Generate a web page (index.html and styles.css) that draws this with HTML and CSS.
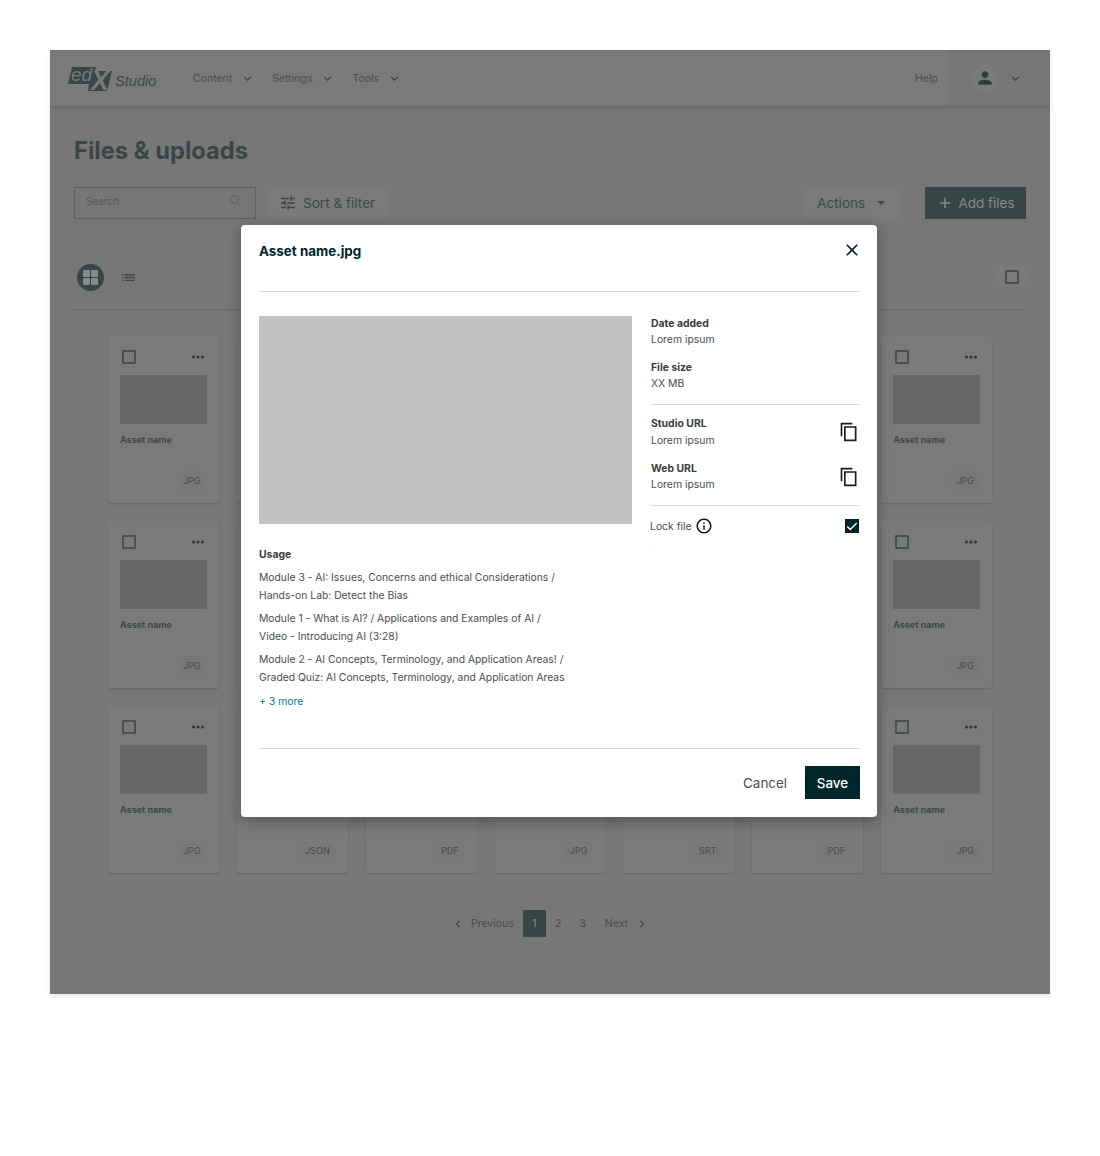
FILE: index.html
```html
<!doctype html>
<html lang="en">
<head>
    <meta charset="UTF-8" />
    <meta name="viewport" content="width=device-width, initial-scale=1.0" />
    <title>Files &amp; uploads</title>
    <link rel="stylesheet" href="styles.css">
</head>
<body>
    <svg class="icon-defs" width="0" height="0">
        <symbol id="i-chev" viewBox="0 0 24 24"><path d="M7.4 8.6 12 13.2l4.6-4.6L18 10l-6 6-6-6z"/></symbol>
        <symbol id="i-left" viewBox="0 0 24 24"><path d="M15.4 7.4 10.8 12l4.6 4.6L14 18l-6-6 6-6z"/></symbol>
        <symbol id="i-right" viewBox="0 0 24 24"><path d="M8.6 16.6 13.2 12 8.6 7.4 10 6l6 6-6 6z"/></symbol>
        <symbol id="i-dots" viewBox="0 0 24 24"><path d="M6 10a2 2 0 1 0 0 4 2 2 0 0 0 0-4zm12 0a2 2 0 1 0 0 4 2 2 0 0 0 0-4zm-6 0a2 2 0 1 0 0 4 2 2 0 0 0 0-4z"/></symbol>
        <symbol id="i-copy" viewBox="0 0 24 24"><path d="M16 1H2v16h2V3h12V1zm5 4H6v18h15V5zm-2 16H8V7h11v14z"/></symbol>
        <symbol id="i-box" viewBox="0 0 24 24"><path d="M21 3H3v18h18V3zm-2 16H5V5h14v14z"/></symbol>
    </svg>

    <div class="frame">
        <header class="site-header">
            <div class="logo">
                <svg class="logo-mark" width="46" height="26" viewBox="0 0 46 26">
                    <polygon points="4,1 28,1 27,5 44,5 39,25 20,25 21,18 0,18" fill="#384646"/>
                    <text x="3" y="15" class="logo-ed">ed</text>
                    <text x="23" y="24" class="logo-x">X</text>
                </svg>
                <span class="logo-studio">Studio</span>
            </div>
            <nav class="main-nav">
                <a href="#">Content <svg class="nav-chev"><use href="#i-chev"/></svg></a>
                <a href="#">Settings <svg class="nav-chev"><use href="#i-chev"/></svg></a>
                <a href="#">Tools <svg class="nav-chev"><use href="#i-chev"/></svg></a>
            </nav>
            <a href="#" class="help-link">Help</a>
            <div class="user-menu">
                <span class="avatar"><svg viewBox="0 0 24 24" width="20" height="20"><path d="M12 12c2.2 0 4-1.8 4-4s-1.8-4-4-4-4 1.8-4 4 1.8 4 4 4zm0 2c-2.7 0-8 1.3-8 4v2h16v-2c0-2.7-5.3-4-8-4z"/></svg></span>
                <svg class="nav-chev"><use href="#i-chev"/></svg>
            </div>
        </header>

        <main class="content">
            <h1 class="page-title">Files &amp; uploads</h1>

            <div class="toolbar">
                <div class="search-box">
                    <span>Search</span>
                    <svg viewBox="0 0 24 24" width="16" height="16"><path d="M15.5 14h-.79l-.28-.27A6.47 6.47 0 0 0 16 9.5 6.5 6.5 0 1 0 9.5 16c1.61 0 3.09-.59 4.23-1.57l.27.28v.79l5 4.99L20.49 19l-4.99-5zm-6 0C7.01 14 5 11.99 5 9.5S7.01 5 9.5 5 14 7.01 14 9.5 11.99 14 9.5 14z"/></svg>
                </div>
                <button class="tool-btn sort-btn">
                    <svg viewBox="0 0 24 24" width="18" height="18"><path d="M3 17v2h6v-2H3zM3 5v2h10V5H3zm10 16v-2h8v-2h-8v-2h-2v6h2zM7 9v2H3v2h4v2h2V9H7zm14 4v-2H11v2h10zm-6-4h2V7h4V5h-4V3h-2v6z"/></svg>
                    Sort &amp; filter
                </button>
                <button class="tool-btn actions-btn">Actions <i class="caret"></i></button>
                <button class="add-btn">
                    <svg viewBox="0 0 24 24" width="18" height="18"><path d="M19 13h-6v6h-2v-6H5v-2h6V5h2v6h6z"/></svg>
                    Add files
                </button>
            </div>

            <div class="view-row">
                <span class="view-grid"><i></i><i></i><i></i><i></i></span>
                <svg class="view-list" viewBox="0 0 24 24" width="17" height="17"><path d="M3 13h2v-2H3v2zm0 4h2v-2H3v2zm0-8h2V7H3v2zm4 4h14v-2H7v2zm0 4h14v-2H7v2zM7 7v2h14V7H7z"/></svg>
                <span class="select-all"><svg viewBox="0 0 24 24" width="18" height="18"><use href="#i-box"/></svg></span>
            </div>

            <div class="card-grid">
                <div class="card"><div class="card-top"><svg class="card-check"><use href="#i-box"/></svg><svg class="card-dots"><use href="#i-dots"/></svg></div><div class="thumb"></div><p class="asset-name">Asset name</p><span class="badge">JPG</span></div>
                <div class="card"><div class="card-top"><svg class="card-check"><use href="#i-box"/></svg><svg class="card-dots"><use href="#i-dots"/></svg></div><div class="thumb"></div><p class="asset-name">Asset name</p><span class="badge">JPG</span></div>
                <div class="card"><div class="card-top"><svg class="card-check"><use href="#i-box"/></svg><svg class="card-dots"><use href="#i-dots"/></svg></div><div class="thumb"></div><p class="asset-name">Asset name</p><span class="badge">JPG</span></div>
                <div class="card"><div class="card-top"><svg class="card-check"><use href="#i-box"/></svg><svg class="card-dots"><use href="#i-dots"/></svg></div><div class="thumb"></div><p class="asset-name">Asset name</p><span class="badge">JPG</span></div>
                <div class="card"><div class="card-top"><svg class="card-check"><use href="#i-box"/></svg><svg class="card-dots"><use href="#i-dots"/></svg></div><div class="thumb"></div><p class="asset-name">Asset name</p><span class="badge">JPG</span></div>
                <div class="card"><div class="card-top"><svg class="card-check"><use href="#i-box"/></svg><svg class="card-dots"><use href="#i-dots"/></svg></div><div class="thumb"></div><p class="asset-name">Asset name</p><span class="badge">JPG</span></div>
                <div class="card"><div class="card-top"><svg class="card-check"><use href="#i-box"/></svg><svg class="card-dots"><use href="#i-dots"/></svg></div><div class="thumb"></div><p class="asset-name">Asset name</p><span class="badge">JPG</span></div>

                <div class="card"><div class="card-top"><svg class="card-check"><use href="#i-box"/></svg><svg class="card-dots"><use href="#i-dots"/></svg></div><div class="thumb"></div><p class="asset-name">Asset name</p><span class="badge">JPG</span></div>
                <div class="card"><div class="card-top"><svg class="card-check"><use href="#i-box"/></svg><svg class="card-dots"><use href="#i-dots"/></svg></div><div class="thumb"></div><p class="asset-name">Asset name</p><span class="badge">JPG</span></div>
                <div class="card"><div class="card-top"><svg class="card-check"><use href="#i-box"/></svg><svg class="card-dots"><use href="#i-dots"/></svg></div><div class="thumb"></div><p class="asset-name">Asset name</p><span class="badge">JPG</span></div>
                <div class="card"><div class="card-top"><svg class="card-check"><use href="#i-box"/></svg><svg class="card-dots"><use href="#i-dots"/></svg></div><div class="thumb"></div><p class="asset-name">Asset name</p><span class="badge">JPG</span></div>
                <div class="card"><div class="card-top"><svg class="card-check"><use href="#i-box"/></svg><svg class="card-dots"><use href="#i-dots"/></svg></div><div class="thumb"></div><p class="asset-name">Asset name</p><span class="badge">JPG</span></div>
                <div class="card"><div class="card-top"><svg class="card-check"><use href="#i-box"/></svg><svg class="card-dots"><use href="#i-dots"/></svg></div><div class="thumb"></div><p class="asset-name">Asset name</p><span class="badge">JPG</span></div>
                <div class="card"><div class="card-top"><svg class="card-check"><use href="#i-box"/></svg><svg class="card-dots"><use href="#i-dots"/></svg></div><div class="thumb"></div><p class="asset-name">Asset name</p><span class="badge">JPG</span></div>

                <div class="card"><div class="card-top"><svg class="card-check"><use href="#i-box"/></svg><svg class="card-dots"><use href="#i-dots"/></svg></div><div class="thumb"></div><p class="asset-name">Asset name</p><span class="badge">JPG</span></div>
                <div class="card"><div class="card-top"><svg class="card-check"><use href="#i-box"/></svg><svg class="card-dots"><use href="#i-dots"/></svg></div><div class="thumb"></div><p class="asset-name">Asset name</p><span class="badge">JSON</span></div>
                <div class="card"><div class="card-top"><svg class="card-check"><use href="#i-box"/></svg><svg class="card-dots"><use href="#i-dots"/></svg></div><div class="thumb"></div><p class="asset-name">Asset name</p><span class="badge">PDF</span></div>
                <div class="card"><div class="card-top"><svg class="card-check"><use href="#i-box"/></svg><svg class="card-dots"><use href="#i-dots"/></svg></div><div class="thumb"></div><p class="asset-name">Asset name</p><span class="badge">JPG</span></div>
                <div class="card"><div class="card-top"><svg class="card-check"><use href="#i-box"/></svg><svg class="card-dots"><use href="#i-dots"/></svg></div><div class="thumb"></div><p class="asset-name">Asset name</p><span class="badge">SRT</span></div>
                <div class="card"><div class="card-top"><svg class="card-check"><use href="#i-box"/></svg><svg class="card-dots"><use href="#i-dots"/></svg></div><div class="thumb"></div><p class="asset-name">Asset name</p><span class="badge">PDF</span></div>
                <div class="card"><div class="card-top"><svg class="card-check"><use href="#i-box"/></svg><svg class="card-dots"><use href="#i-dots"/></svg></div><div class="thumb"></div><p class="asset-name">Asset name</p><span class="badge">JPG</span></div>
            </div>

            <div class="pagination">
                <svg class="page-chev"><use href="#i-left"/></svg>
                <a href="#" class="page-prev">Previous</a>
                <a href="#" class="page-num active">1</a>
                <a href="#" class="page-num">2</a>
                <a href="#" class="page-num">3</a>
                <a href="#" class="page-next">Next</a>
                <svg class="page-chev"><use href="#i-right"/></svg>
            </div>
        </main>

        <div class="modal">
            <div class="modal-header">
                <h2>Asset name.jpg</h2>
                <svg viewBox="0 0 24 24" width="20" height="20"><path d="M19 6.4 17.6 5 12 10.6 6.4 5 5 6.4 10.6 12 5 17.6 6.4 19 12 13.4 17.6 19 19 17.6 13.4 12z"/></svg>
            </div>

            <div class="modal-body">
                <div class="modal-left">
                    <div class="preview"></div>
                    <h3 class="usage-title">Usage</h3>
                    <p class="usage-item">Module 3 - AI: Issues, Concerns and ethical Considerations /<br>Hands-on Lab: Detect the Bias</p>
                    <p class="usage-item">Module 1 - What is AI? / Applications and Examples of AI /<br>Video - Introducing AI (3:28)</p>
                    <p class="usage-item">Module 2 - AI Concepts, Terminology, and Application Areas! /<br>Graded Quiz: AI Concepts, Terminology, and Application Areas</p>
                    <a href="#" class="more-link">+ 3 more</a>
                </div>

                <div class="modal-right">
                    <div class="info-block">
                        <h4>Date added</h4>
                        <p>Lorem ipsum</p>
                    </div>
                    <div class="info-block">
                        <h4>File size</h4>
                        <p>XX MB</p>
                    </div>
                    <hr class="info-rule rule-one">
                    <div class="info-block url-block">
                        <div>
                            <h4>Studio URL</h4>
                            <p>Lorem ipsum</p>
                        </div>
                        <svg class="copy-icon"><use href="#i-copy"/></svg>
                    </div>
                    <div class="info-block url-block">
                        <div>
                            <h4>Web URL</h4>
                            <p>Lorem ipsum</p>
                        </div>
                        <svg class="copy-icon"><use href="#i-copy"/></svg>
                    </div>
                    <hr class="info-rule rule-two">
                    <div class="lock-row">
                        <span>Lock file</span>
                        <svg viewBox="0 0 24 24" width="18" height="18"><path d="M11 7h2v2h-2zm0 4h2v6h-2zm1-9C6.5 2 2 6.5 2 12s4.5 10 10 10 10-4.5 10-10S17.5 2 12 2zm0 18c-4.4 0-8-3.6-8-8s3.6-8 8-8 8 3.6 8 8-3.6 8-8 8z"/></svg>
                        <span class="lock-check"><svg viewBox="0 0 24 24" width="14" height="14"><path d="M9 16.2 4.8 12 3 13.8l6 6L21 7.8 19.2 6z"/></svg></span>
                    </div>
                    <p class="lock-note">.</p>
                </div>
            </div>

            <div class="modal-footer">
                <button class="cancel-btn">Cancel</button>
                <button class="save-btn">Save</button>
            </div>
        </div>
    </div>
</body>
</html>
```

FILE: styles.css
```css
body {
    font-family: "Inter", "Liberation Sans", sans-serif;
    margin: 0;
    padding: 0;
    background-color: #fff;
    color: #4c4c4c;
}

h1, h2, h3, h4, p {
    margin: 0;
}

a {
    color: inherit;
    text-decoration: none;
}

button {
    font-family: inherit;
    border: none;
    cursor: pointer;
}

.icon-defs {
    position: absolute;
}

.frame {
    position: relative;
    width: 1000px;
    height: 944px;
    margin: 50px 50px 162px;
    background-color: #777;
    box-shadow: 0 2px 6px rgba(0, 0, 0, 0.1);
    overflow: hidden;
}

/* header */
.site-header {
    display: flex;
    align-items: center;
    height: 56px;
    background-color: #7a7a7a;
    box-shadow: 0 1px 3px rgba(0, 0, 0, 0.2);
    position: relative;
}

.logo {
    display: flex;
    align-items: center;
    margin-left: 18px;
    width: 125px;
    padding-top: 1px;
}

.logo-mark {
    overflow: visible;
}

.logo-ed {
    font: italic 400 19px "Liberation Sans", sans-serif;
    fill: #7a7a7a;
}

.logo-x {
    font: italic 700 27px "Liberation Sans", sans-serif;
    fill: #7a7a7a;
}

.logo-studio {
    font: italic 400 14.6px "Liberation Sans", sans-serif;
    color: #3c4848;
    margin-left: 1px;
    padding-top: 4px;
}

.main-nav {
    display: flex;
    gap: 17px;
    font-size: 10.5px;
    flex: 1;
}

.main-nav a {
    display: flex;
    align-items: center;
    gap: 8px;
}

.nav-chev {
    width: 15px;
    height: 15px;
    fill: #3a4646;
}

.help-link {
    font-size: 10.5px;
    width: 23px;
    margin-right: 9px;
}

.user-menu {
    display: flex;
    align-items: center;
    width: 103px;
    height: 56px;
    box-sizing: border-box;
    padding-left: 25px;
    gap: 10px;
    background-color: #767676;
}

.avatar {
    display: flex;
    align-items: center;
    justify-content: center;
    width: 26px;
    height: 26px;
    border-radius: 50%;
    background-color: #7a7a7a;
    fill: #303c3c;
}

.content {
    padding: 0 24px;
}

.page-title {
    font-size: 23.7px;
    font-weight: 700;
    line-height: 32px;
    color: #384646;
    margin-top: 28.5px;
}

/* toolbar */
.toolbar {
    display: flex;
    align-items: center;
    margin-top: 20.5px;
}

.search-box {
    display: flex;
    align-items: center;
    justify-content: space-between;
    box-sizing: border-box;
    width: 182px;
    height: 32px;
    border: 1px solid #5c6060;
    padding: 0 11px 4px;
    font-size: 10px;
    color: #5a5a5a;
    fill: #676767;
}

.tool-btn {
    display: flex;
    align-items: center;
    height: 32px;
    background-color: #7a7a7a;
    color: #3d4848;
    font-size: 13.6px;
    white-space: nowrap;
}

.sort-btn {
    margin-left: 13px;
    width: 118px;
    padding: 0 10px;
    gap: 6px;
    fill: #3a4646;
}

.actions-btn {
    margin-left: auto;
    width: 95px;
    padding: 0 12px;
    gap: 12px;
}

.caret {
    width: 0;
    height: 0;
    border-left: 4px solid transparent;
    border-right: 4px solid transparent;
    border-top: 4px solid #3a4646;
}

.add-btn {
    display: flex;
    align-items: center;
    justify-content: center;
    gap: 4px;
    width: 101px;
    height: 32px;
    margin-left: 25px;
    background-color: #384646;
    color: #858b8b;
    font-size: 13.5px;
    fill: #858b8b;
}

/* view switch */
.view-row {
    display: flex;
    align-items: center;
    box-sizing: border-box;
    height: 74px;
    margin-top: 17px;
    margin-left: -3px;
    padding: 14px 0 5px 6px;
    border-bottom: 1px solid #6b6b6b;
}

.view-grid {
    display: grid;
    grid-template-columns: 7px 7px;
    gap: 1px;
    align-content: center;
    justify-content: center;
    width: 27px;
    height: 27px;
    border-radius: 50%;
    background-color: #384646;
}

.view-grid i {
    height: 7px;
    border-radius: 1px;
    background-color: #858b8b;
}

.view-list {
    margin-left: 16px;
    fill: #384646;
}

.select-all {
    display: flex;
    align-items: center;
    justify-content: center;
    width: 28px;
    height: 20px;
    margin-left: auto;
    background-color: #7a7a7a;
    border-radius: 3px;
    fill: #384646;
}

/* cards */
.card-grid {
    display: grid;
    grid-template-columns: repeat(7, 1fr);
    column-gap: 18px;
    row-gap: 18px;
    margin: 26px 34px 0;
}

.card {
    position: relative;
    box-sizing: border-box;
    height: 167px;
    padding: 12px;
    background-color: #7a7a7a;
    border-radius: 3px;
    box-shadow: 0 1px 2px rgba(0, 0, 0, 0.15);
}

.card-top {
    display: flex;
    align-items: center;
    justify-content: space-between;
    height: 18px;
    margin-bottom: 9px;
}

.card-check {
    width: 18px;
    height: 18px;
    fill: #384646;
}

.card-dots {
    width: 18px;
    height: 18px;
    fill: #2f3838;
}

.thumb {
    height: 49px;
    background-color: #676767;
}

.asset-name {
    margin-top: 10px;
    font-size: 9px;
    font-weight: 700;
    line-height: 12px;
    color: #3d4848;
}

.badge {
    position: absolute;
    right: 13px;
    bottom: 11px;
    padding: 0 5px;
    height: 21px;
    line-height: 19px;
    font-size: 9px;
    border-radius: 4px;
    color: #4c4c4c;
    background-color: #787878;
}

/* pagination */
.pagination {
    display: flex;
    align-items: center;
    justify-content: center;
    height: 27px;
    margin-top: 37px;
    font-size: 10.5px;
}

.page-chev {
    width: 14px;
    height: 14px;
    fill: #3a4646;
}

.page-prev {
    margin-left: 6px;
    margin-right: 9px;
}

.page-num {
    display: flex;
    align-items: center;
    justify-content: center;
    width: 24.5px;
    height: 27px;
}

.page-num.active {
    width: 23px;
    background-color: #384646;
    color: #858b8b;
}

.page-next {
    margin-left: 10px;
    margin-right: 7px;
}

/* modal */
.modal {
    position: absolute;
    left: 191px;
    top: 175px;
    display: flex;
    flex-direction: column;
    box-sizing: border-box;
    width: 636px;
    height: 592px;
    padding: 0 17px 0 18px;
    background-color: #fff;
    border-radius: 4px;
    box-shadow: 0 4px 14px rgba(0, 0, 0, 0.3);
}

.modal-header {
    display: flex;
    align-items: center;
    justify-content: space-between;
    box-sizing: border-box;
    height: 67px;
    padding-bottom: 15px;
    border-bottom: 1px solid #dcdcdc;
    fill: #00262b;
}

.modal-header h2 {
    font-size: 13.4px;
    font-weight: 700;
    color: #00262b;
}

.modal-header svg {
    margin-right: -2px;
    margin-bottom: 1px;
}

.modal-body {
    display: flex;
    flex: 1;
    padding-top: 24px;
}

.modal-left {
    width: 373px;
    margin-right: 19px;
}

.preview {
    height: 207.5px;
    background-color: #c2c2c2;
}

.usage-title {
    margin-top: 23.5px;
    margin-bottom: 2px;
    font-size: 10.4px;
    font-weight: 700;
    line-height: 16px;
    color: #3c3c3c;
}

.usage-item {
    margin-top: 5px;
    font-size: 10.33px;
    line-height: 18px;
    color: #4d4d4d;
    white-space: nowrap;
}

.more-link {
    display: block;
    margin-top: 7px;
    font-size: 10.4px;
    line-height: 18px;
    color: #0a7a96;
}

.modal-right {
    flex: 1;
}

.info-block {
    margin-bottom: 12px;
}

.info-block h4 {
    font-size: 10.4px;
    font-weight: 700;
    line-height: 16px;
    color: #3c3c3c;
}

.info-block p {
    font-size: 10.4px;
    line-height: 16px;
    color: #4d4d4d;
}

.url-block {
    display: flex;
    align-items: center;
    justify-content: space-between;
    margin-bottom: 12px;
}

.url-block p {
    margin-top: 0.5px;
}

.copy-icon {
    width: 20px;
    height: 20px;
    margin-right: 1px;
    fill: #1c1c1c;
}

.info-rule {
    border: none;
    border-top: 1px solid #dcdcdc;
    margin: 0;
}

.rule-one {
    margin-top: 12px;
    margin-bottom: 11px;
}

.rule-two {
    margin-top: 8.5px;
    margin-bottom: 11px;
}

.lock-row {
    display: flex;
    align-items: center;
    gap: 3px;
    height: 18px;
    margin-left: -1px;
    font-size: 10.4px;
    color: #4d4d4d;
    fill: #111;
}

.lock-check {
    display: flex;
    align-items: center;
    justify-content: center;
    width: 14px;
    height: 14px;
    margin-left: auto;
    margin-right: 1.5px;
    background-color: #00262b;
    fill: #fff;
}

.lock-note {
    margin-top: 6px;
    font-size: 6px;
    line-height: 8px;
    color: #aaa;
}

.modal-footer {
    display: flex;
    align-items: center;
    justify-content: flex-end;
    gap: 18px;
    height: 69px;
    padding-bottom: 2px;
    box-sizing: border-box;
    border-top: 1px solid #dcdcdc;
}

.cancel-btn {
    background: none;
    padding: 1px 0 0;
    font-size: 13.4px;
    color: #4d4d4d;
}

.save-btn {
    width: 55px;
    height: 33px;
    padding: 1px 0 0;
    background-color: #00262b;
    color: #fff;
    font-size: 13.4px;
    font-weight: 500;
}
```
